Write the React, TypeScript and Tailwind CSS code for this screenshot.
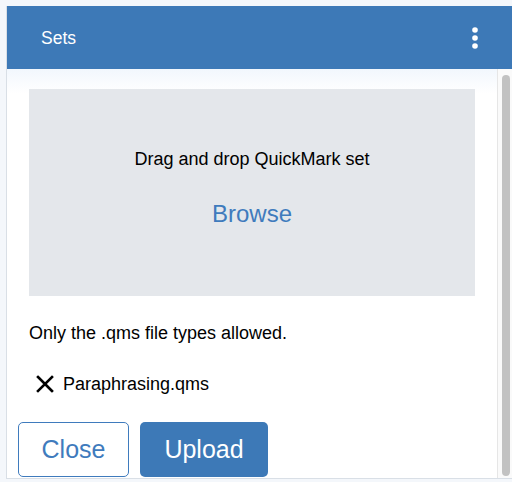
export default function App() {
    return (
        <div className="w-[512px] h-[482px] bg-[#f4f7fb] pt-[6px] pl-[6px] overflow-hidden font-['Liberation_Sans',Arial,sans-serif]">
            <div className="flex flex-col h-[473px] border-l border-b border-[#d9dfe6] bg-white">
                <div className="h-[63px] shrink-0 bg-[#3d79b7] flex items-center justify-between pl-[34px] pr-[34px]">
                    <span className="text-white text-[17.5px] leading-none pt-[2px]">Sets</span>
                    <svg width="6" height="22" viewBox="0 0 6 22" className="text-white">
                        <circle cx="3" cy="3" r="2.8" fill="currentColor" />
                        <circle cx="3" cy="11" r="2.8" fill="currentColor" />
                        <circle cx="3" cy="19" r="2.8" fill="currentColor" />
                    </svg>
                </div>
                <div className="flex flex-1 min-h-0">
                    <div className="flex-1 overflow-hidden bg-linear-to-b from-[#f2f7fd] to-white to-[6%] pt-[20px] px-[22px]">
                        <div className="h-[207px] bg-[#e4e7eb] flex flex-col items-center pt-[58px]">
                            <p className="text-[18px] leading-[24px] text-black">Drag and drop QuickMark set</p>
                            <button className="mt-[27px] text-[24px] leading-[32px] text-[#3f7bbd]">Browse</button>
                        </div>
                        <p className="mt-[25px] text-[18px] leading-[24px] text-black">Only the .qms file types allowed.</p>
                        <div className="mt-[27px] flex items-center h-[24px]">
                            <svg width="18" height="18" viewBox="0 0 18 18" className="ml-[7px] text-black">
                                <path d="M2 2L16 16M16 2L2 16" stroke="currentColor" strokeWidth="2.6" strokeLinecap="square" />
                            </svg>
                            <span className="ml-[9px] text-[18px] leading-[24px] text-black">Paraphrasing.qms</span>
                        </div>
                        <div className="mt-[26px] -ml-[11px] flex gap-[11px]">
                            <button className="w-[111px] h-[55px] rounded-[5px] border border-[#3f7bbd] bg-white text-[25px] text-[#3f7bbd]">
                                Close
                            </button>
                            <button className="w-[128px] h-[55px] rounded-[5px] bg-[#3d79b7] text-[25px] text-white">
                                Upload
                            </button>
                        </div>
                    </div>
                    <div className="w-[15px] shrink-0 border-l border-[#e6e6e6] bg-[#fafafa] pt-[6px] pl-[4px] pb-[2px]">
                        <div className="w-[8px] h-full rounded-full bg-[#c2c2c2]" />
                    </div>
                </div>
            </div>
        </div>
    )
}
